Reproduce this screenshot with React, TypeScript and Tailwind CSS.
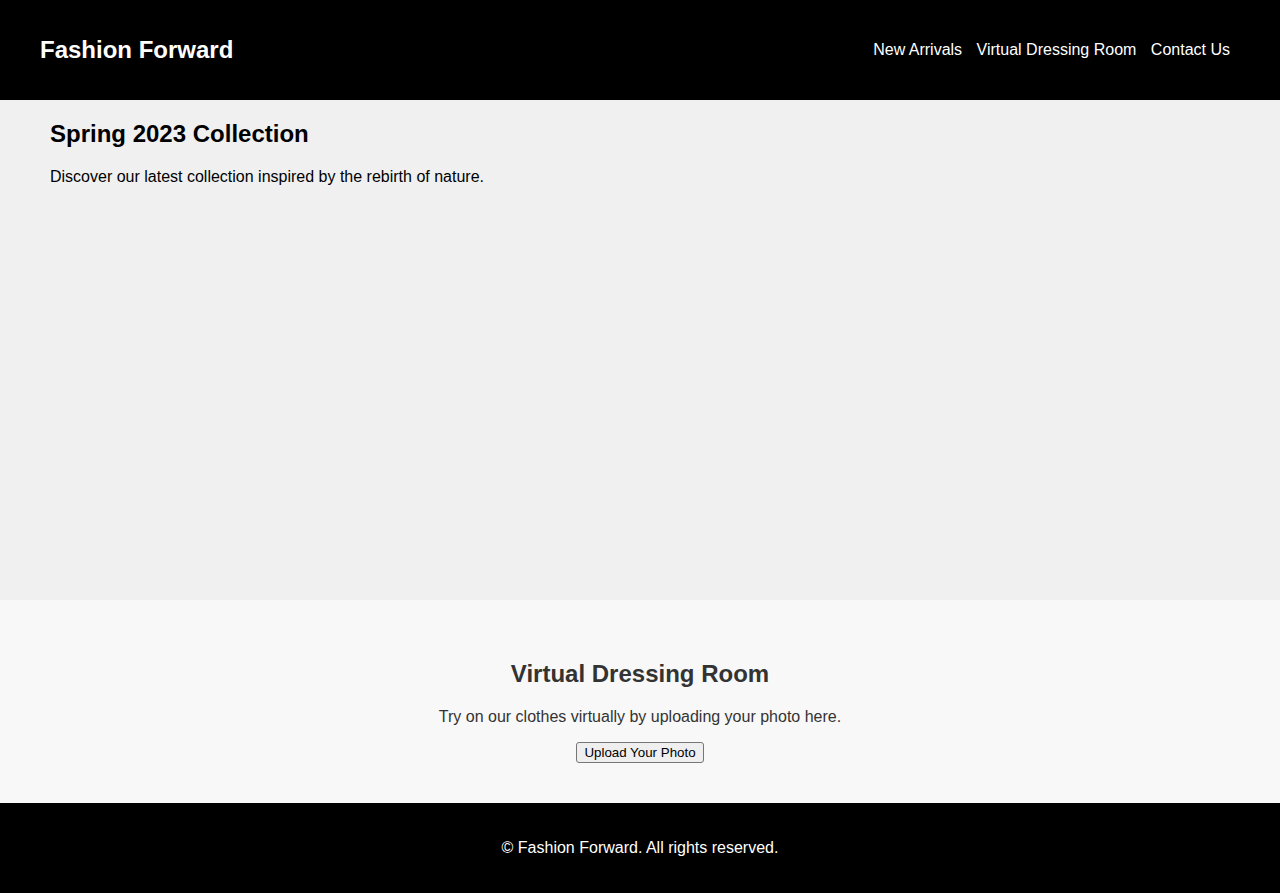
export default function App() {
  return (
    <div className="min-h-screen flex flex-col font-['Liberation_Sans',Arial,sans-serif] text-base">
      <header className="bg-black text-white h-[100px] shrink-0 pl-10 pr-[50px] flex items-center justify-between">
        <h1 className="text-2xl font-bold leading-[normal]">Fashion Forward</h1>
        <nav className="flex items-center gap-[14.5px] leading-[normal]">
          <a href="#">New Arrivals</a>
          <a href="#">Virtual Dressing Room</a>
          <a href="#">Contact Us</a>
        </nav>
      </header>

      <section className="bg-[#f0f0f0] h-[500px] shrink-0 px-[50px] pt-5">
        <h2 className="text-2xl font-bold leading-[normal] text-black mb-5">Spring 2023 Collection</h2>
        <p className="leading-[normal] text-black">Discover our latest collection inspired by the rebirth of nature.</p>
      </section>

      <section className="bg-[#f8f8f8] pt-10 pb-10 shrink-0 text-center text-[#333]">
        <h2 className="text-2xl font-bold leading-[normal] mt-5 mb-5">Virtual Dressing Room</h2>
        <p className="leading-[normal] mb-4">Try on our clothes virtually by uploading your photo here.</p>
        <button className="block mx-auto h-[21px] w-[128px] text-[13.33px] leading-[normal] text-black bg-[#efefef] border border-[#767676] rounded-[3px] px-[6px]">
          Upload Your Photo
        </button>
      </section>

      <footer className="bg-black text-white text-center pt-9 flex-1">
        <p className="leading-[normal]">© Fashion Forward. All rights reserved.</p>
      </footer>
    </div>
  );
}
